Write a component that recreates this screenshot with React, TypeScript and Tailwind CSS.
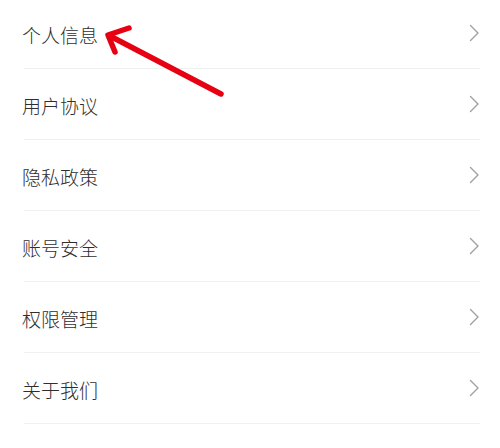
const items = ["个人信息", "用户协议", "隐私政策", "账号安全", "权限管理", "关于我们"]

function Chevron() {
  return (
    <svg width="10" height="18" viewBox="0 0 10 18" fill="none" stroke="#a0a0a0" strokeWidth="1.4" strokeLinecap="round" strokeLinejoin="round">
      <polyline points="1.5,1.5 9,9 1.5,16.5" />
    </svg>
  )
}

export default function App() {
  return (
    <div
      className="relative w-[500px] h-[448px] bg-white overflow-hidden"
      style={{ fontFamily: '"Noto Sans CJK SC", "Noto Sans", sans-serif' }}
    >
      <div className="-mt-[2px] flex flex-col">
        {items.map((label) => (
          <div key={label}>
            <div className="h-[70px] flex items-center justify-between pl-[22px] pr-[21px]">
              <span className="text-[19px] leading-none font-light text-[#2e2e2e] pt-[2px]">{label}</span>
              <Chevron />
            </div>
            <div className="ml-[24px] mr-[20px] h-px bg-[#f0f0f0]" />
          </div>
        ))}
      </div>

      {/* 紅色箭頭 */}
      <svg className="absolute left-0 top-0 pointer-events-none" width="500" height="448" viewBox="0 0 500 448">
        <g stroke="#e60012" strokeWidth="5.5" strokeLinecap="round" strokeLinejoin="round" fill="none">
          <line x1="221" y1="94" x2="110" y2="36" />
          <polyline points="129,28 108,35 115,52" />
        </g>
      </svg>
    </div>
  )
}
